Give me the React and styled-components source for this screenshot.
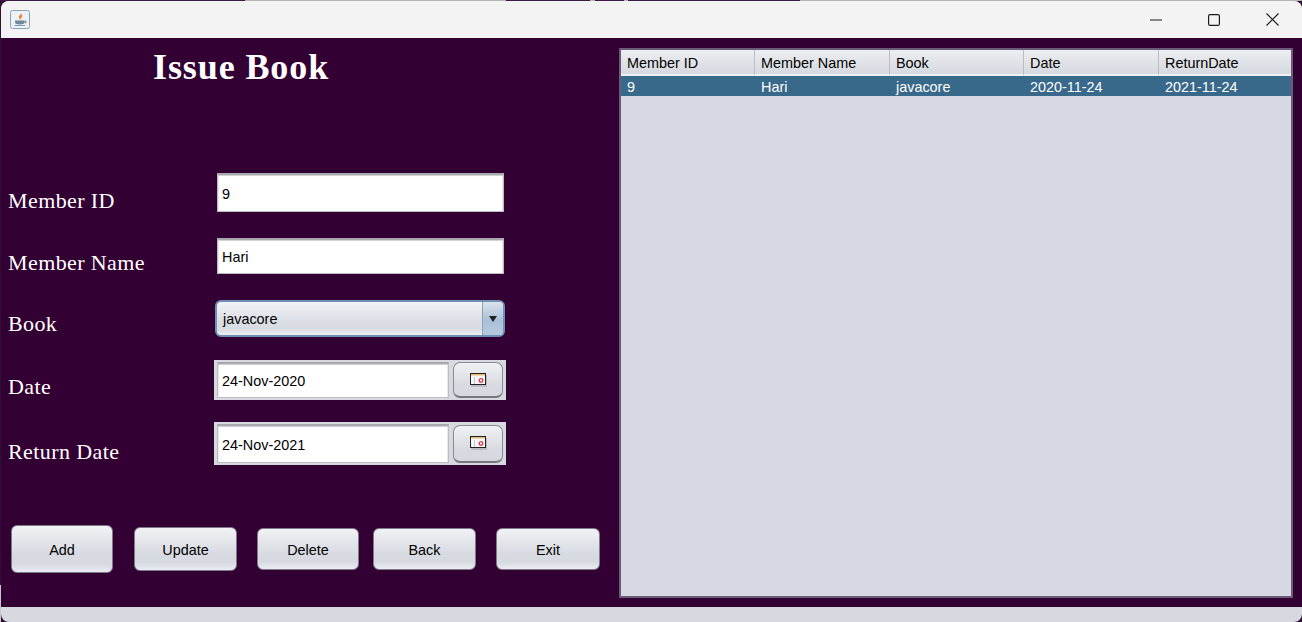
import React from "react";
import styled, { createGlobalStyle } from "styled-components";

const GlobalStyle = createGlobalStyle`
  html, body {
    margin: 0;
    padding: 0;
    height: 100%;
    overflow: hidden;
    background-color: #2f0f35;
    /* desktop showing behind the window edge */
    background-image:
      linear-gradient(90deg, #3d1a45 245px, #b4b4b4 245px, #b4b4b4 506px, #3d1a45 506px, #3d1a45 590px, #b4b4b4 590px, #b4b4b4 595px, #3d1a45 595px, #3d1a45 624px, #b4b4b4 624px, #b4b4b4 628px, #3d1a45 628px, #3d1a45 800px, #b4b4b4 800px),
      linear-gradient(#2f0f35 585px, #c4c6cb 585px);
    background-size: 100% 1px, 1px 100%;
    background-repeat: no-repeat;
  }
`;

const Window = styled.div`
  width: 1301px;
  height: 621px;
  margin: 1px 0 0 1px;
  border-radius: 8px;
  overflow: hidden;
  display: flex;
  flex-direction: column;
  background: #d6d9df;
  font-family: "Liberation Sans", Arial, sans-serif;
`;

const TitleBar = styled.div`
  height: 37px;
  flex: none;
  display: flex;
  align-items: center;
  background: #f3f3f3;
  padding-left: 9px;
`;

const WindowButtons = styled.div`
  margin-left: auto;
  display: flex;
`;

const WindowButton = styled.div`
  width: 59px;
  height: 37px;
  display: flex;
  align-items: center;
  justify-content: center;
`;

const Content = styled.div`
  height: 569px;
  flex: none;
  display: flex;
  background: #330033;
`;

const FormPanel = styled.div`
  width: 618px;
  flex: none;
  display: flex;
  flex-direction: column;
  padding-left: 7px;
  box-sizing: border-box;
`;

const Title = styled.h1`
  margin: 9px 0 0 145px;
  height: 40px;
  font: bold 36px/40px "Liberation Serif", "Times New Roman", serif;
  letter-spacing: 0.9px;
  color: #ffffff;
`;

const Row = styled.div`
  display: flex;
  align-items: flex-start;
  height: ${(p) => p.$height}px;
  margin-top: ${(p) => p.$top}px;
`;

const Label = styled.label`
  width: ${(p) => p.$width}px;
  flex: none;
  padding-top: ${(p) => p.$offset}px;
  font: 22px/32px "Liberation Serif", "Times New Roman", serif;
  letter-spacing: 0.4px;
  color: #ffffff;
`;

const TextField = styled.div`
  width: ${(p) => p.$width}px;
  height: ${(p) => p.$height}px;
  flex: none;
  box-sizing: border-box;
  display: flex;
  align-items: center;
  padding: 1px 0 0 4px;
  background: #ffffff;
  border: 1px solid #bdbcc1;
  border-top: 2px solid #a9a8ac;
  box-shadow: inset 0 1px 1px #cfcfd2, inset 1px 0 0 #ececee, inset -1px 0 0 #ececee;
  font-size: 14.4px;
  color: #000000;
`;

const Select = styled.div`
  width: 290px;
  height: 37px;
  box-sizing: border-box;
  display: flex;
  align-items: stretch;
  border: 2px solid #6f8fb3;
  border-radius: 6px;
  overflow: hidden;
  font-size: 14.4px;
  color: #000000;
  background: linear-gradient(#f2f3f6, #dadde4 60%, #d8dbe2 82%, #eef0f4);
`;

const SelectValue = styled.div`
  flex: 1;
  display: flex;
  align-items: center;
  padding-left: 6px;
`;

const SelectArrow = styled.div`
  width: 20px;
  display: flex;
  align-items: center;
  justify-content: center;
  border-left: 1px solid #8ea3bb;
  background: linear-gradient(#dbe3ec, #a9c0d8 55%, #b7cadf);

  &::after {
    content: "";
    border-left: 4px solid transparent;
    border-right: 4px solid transparent;
    border-top: 6px solid #222222;
  }
`;

const DateChooser = styled.div`
  width: 292px;
  height: ${(p) => p.$height}px;
  box-sizing: border-box;
  display: flex;
  align-items: center;
  gap: 4px;
  padding: 0 2px 0 3px;
  background: #d6d9df;
`;

const DateButton = styled.div`
  width: 50px;
  height: ${(p) => p.$height}px;
  flex: none;
  box-sizing: border-box;
  display: flex;
  align-items: center;
  justify-content: center;
  border: 1px solid #8b8b8f;
  border-bottom: 2px solid #77777b;
  border-radius: 7px;
  background: linear-gradient(#f0f1f4, #d7dae0 70%, #d5d8df);
`;

const ButtonBar = styled.div`
  height: 48px;
  margin-top: 60px;
  margin-left: 3px;
  display: flex;
  align-items: center;
`;

const ActionButton = styled.button`
  width: ${(p) => p.$width}px;
  height: ${(p) => p.$height}px;
  margin-left: ${(p) => p.$gap}px;
  padding: 1px 0 0;
  flex: none;
  box-sizing: border-box;
  border: 1px solid #7f7a88;
  border-radius: 6px;
  background: linear-gradient(#f1f2f5, #d7dae1 62%, #d6d9e0 82%, #e9ecf3);
  font: 14.4px "Liberation Sans", Arial, sans-serif;
  color: #000000;
`;

const TablePanel = styled.div`
  flex: 1;
  padding: 10px 9px 9px 0;
  display: flex;
`;

const Table = styled.div`
  flex: 1;
  box-sizing: border-box;
  border: 2px solid #6b5a78;
  background: #d6d9e1;
  font-size: 14.4px;
`;

const TableRow = styled.div`
  display: grid;
  grid-template-columns: 134px 135px 134px 135px 1fr;
`;

const HeaderCell = styled.div`
  height: 26px;
  box-sizing: border-box;
  display: flex;
  align-items: center;
  padding: 2px 0 0 6px;
  border-right: 1px solid #b9bcc4;
  border-bottom: 2px solid #f0f1f4;
  background: linear-gradient(#eceef1, #d8dbe1 85%);
  color: #000000;

  &:last-child {
    border-right: none;
  }
`;

const BodyCell = styled.div`
  height: 20px;
  box-sizing: border-box;
  display: flex;
  align-items: center;
  padding: 2px 0 0 6px;
  background: #39698a;
  color: #ffffff;
`;

const JavaIcon = () => (
  <svg width="20" height="19" viewBox="0 0 20 19">
    <rect x="0.5" y="0.5" width="19" height="18" rx="2" fill="#eef1f4" stroke="#8ba3b8" />
    <path d="M10.500 2.500c1.500 2-2.500 3-1.500 5.500.3.800 1 1.300 1.600 1.700-.2-1.700 2.600-2.600 1.400-4.700-.5-.8-.9-1.600-1.500-2.500z" fill="#e8883a" />
    <path d="M5 10.500h9.500v1.500c0 1.800-1.800 2.500-4.700 2.500S5 13.800 5 12z" fill="#71879c" />
    <path d="M14.500 11h1.500v1.700h-1.500" fill="none" stroke="#71879c" />
    <path d="M4.500 15.500h10.500" stroke="#8197ad" />
  </svg>
);

const CalendarIcon = () => (
  <svg width="17" height="14" viewBox="0 0 17 14">
    <rect x="1" y="2" width="16" height="12" fill="#b9bcc2" />
    <rect x="0.500" y="0.500" width="15" height="11" fill="#f6f6f6" stroke="#222222" />
    <rect x="1" y="1" width="14" height="1.500" fill="#e2bb74" />
    <rect x="4" y="4" width="1" height="7" fill="#c4c4c4" />
    <circle cx="11" cy="7.500" r="1.800" fill="none" stroke="#e0343c" strokeWidth="1.300" />
  </svg>
);

const columns = ["Member ID", "Member Name", "Book", "Date", "ReturnDate"];
const issued = ["9", "Hari", "javacore", "2020-11-24", "2021-11-24"];

const buttons = [
  { text: "Add", width: 102, height: 48, gap: 0 },
  { text: "Update", width: 103, height: 44, gap: 21 },
  { text: "Delete", width: 102, height: 42, gap: 20 },
  { text: "Back", width: 103, height: 42, gap: 14 },
  { text: "Exit", width: 104, height: 42, gap: 20 },
];

const App = () => {
  return (
    <Window>
      <GlobalStyle />
      <TitleBar>
        <JavaIcon />
        <WindowButtons>
          <WindowButton>
            <svg width="14" height="2" viewBox="0 0 14 2">
              <path d="M2 1h12" stroke="#1a1a1a" strokeWidth="1.100" />
            </svg>
          </WindowButton>
          <WindowButton>
            <svg width="12" height="12" viewBox="0 0 12 12">
              <rect x="0.600" y="0.600" width="10.800" height="10.800" rx="1.500" fill="none" stroke="#1a1a1a" strokeWidth="1.200" />
            </svg>
          </WindowButton>
          <WindowButton>
            <svg width="13" height="13" viewBox="0 0 13 13">
              <path d="M0.500 0.500l12 12M12.500 0.500l-12 12" stroke="#1a1a1a" strokeWidth="1.100" />
            </svg>
          </WindowButton>
        </WindowButtons>
      </TitleBar>
      <Content>
        <FormPanel>
          <Title>Issue Book</Title>
          <Row $top={86} $height={39}>
            <Label $width={209} $offset={12}>Member ID</Label>
            <TextField $width={287} $height={39}>9</TextField>
          </Row>
          <Row $top={26} $height={36}>
            <Label $width={209} $offset={9}>Member Name</Label>
            <TextField $width={287} $height={36}>Hari</TextField>
          </Row>
          <Row $top={26} $height={37}>
            <Label $width={207} $offset={8}>Book</Label>
            <Select>
              <SelectValue>javacore</SelectValue>
              <SelectArrow />
            </Select>
          </Row>
          <Row $top={23} $height={40}>
            <Label $width={206} $offset={11}>Date</Label>
            <DateChooser $height={40}>
              <TextField $width={232} $height={36}>24-Nov-2020</TextField>
              <DateButton $height={36}><CalendarIcon /></DateButton>
            </DateChooser>
          </Row>
          <Row $top={22} $height={43}>
            <Label $width={206} $offset={14}>Return Date</Label>
            <DateChooser $height={43}>
              <TextField $width={232} $height={39}>24-Nov-2021</TextField>
              <DateButton $height={38}><CalendarIcon /></DateButton>
            </DateChooser>
          </Row>
          <ButtonBar>
            {buttons.map((b) => (
              <ActionButton key={b.text} $width={b.width} $height={b.height} $gap={b.gap}>
                {b.text}
              </ActionButton>
            ))}
          </ButtonBar>
        </FormPanel>
        <TablePanel>
          <Table>
            <TableRow>
              {columns.map((c) => (
                <HeaderCell key={c}>{c}</HeaderCell>
              ))}
            </TableRow>
            <TableRow>
              {issued.map((v) => (
                <BodyCell key={v}>{v}</BodyCell>
              ))}
            </TableRow>
          </Table>
        </TablePanel>
      </Content>
    </Window>
  );
};

export default App;
